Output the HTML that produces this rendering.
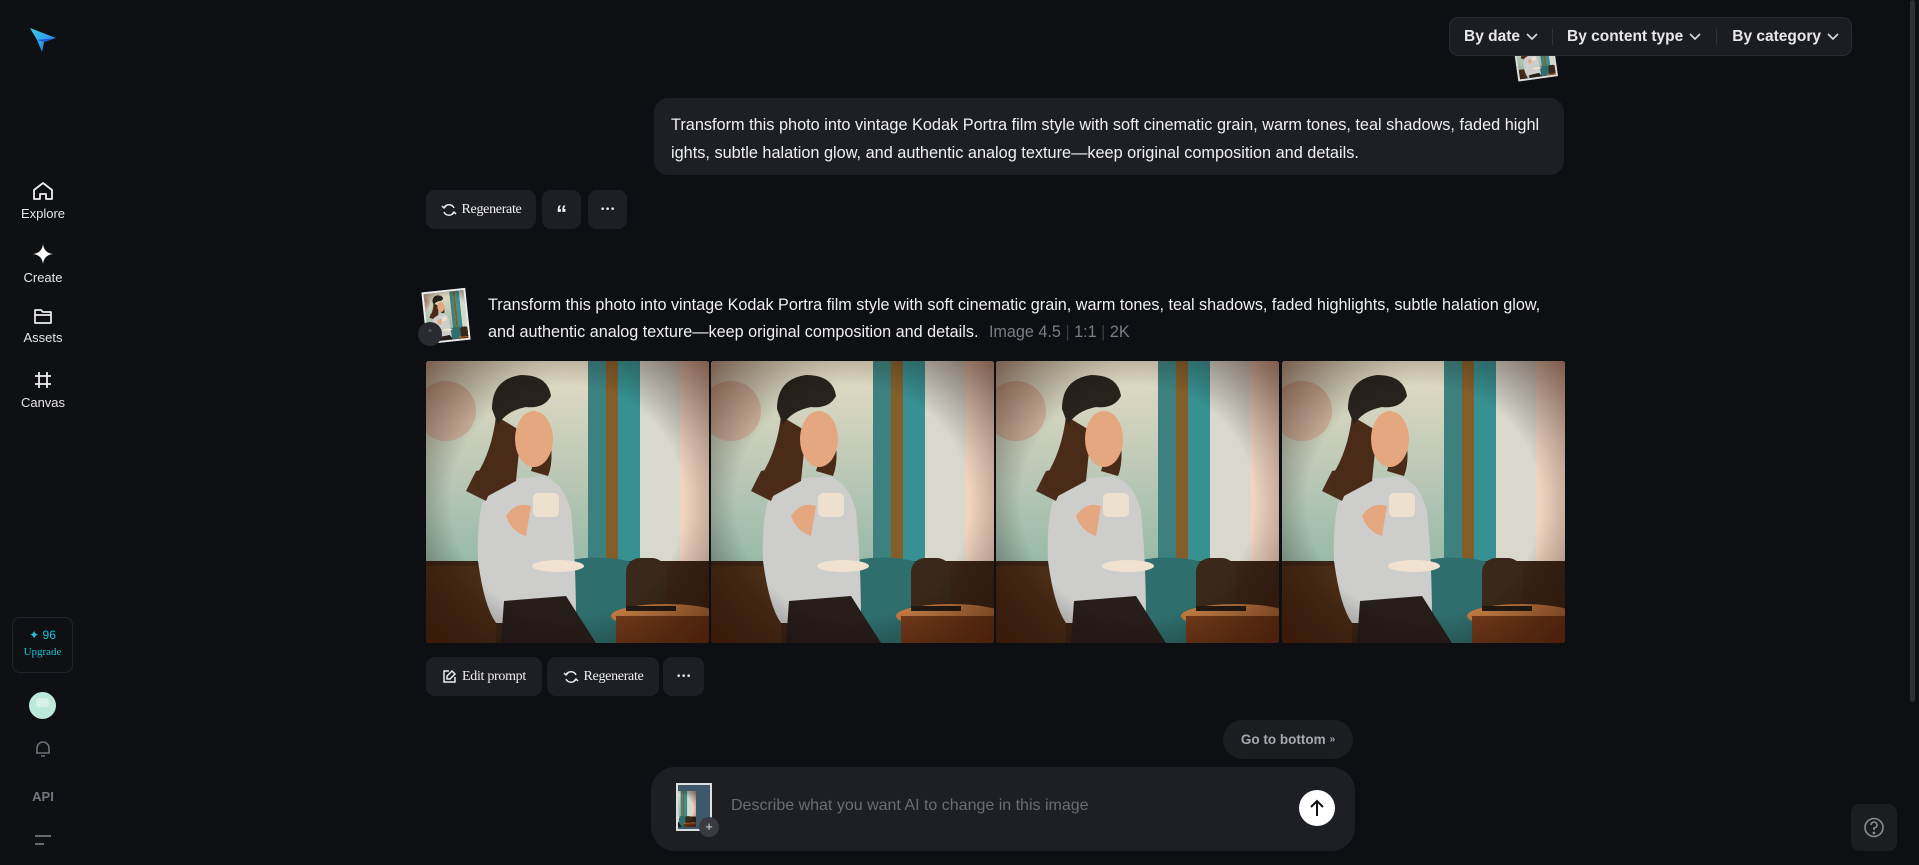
<!DOCTYPE html>
<html><head><meta charset="utf-8"><style>
*{box-sizing:border-box;margin:0;padding:0}
body{width:1919px;height:865px;background:#0e0f12;font-family:"Liberation Sans",sans-serif;color:#e8e9ec;position:relative;overflow:hidden}
.abs{position:absolute}
.side{left:0;top:0;width:86px;height:865px;background:#0f1013}
.nav{position:absolute;left:0;width:86px;text-align:center;font-size:13px;color:#e6e6e6}
.nav svg{display:block;margin:0 auto 5px}
.bubble{background:#1e1f24;border-radius:14px}
.btn{position:absolute;background:#1e1f24;border-radius:9px;height:39px;display:flex;align-items:center;justify-content:center;font-family:"Liberation Serif",serif;font-size:14px;color:#f0f0f0;gap:5px;letter-spacing:-0.3px}
.filters{left:1449px;top:17px;width:403px;height:39px;background:#1c1d22;border:1px solid #2a2b30;border-radius:9px;display:flex;align-items:center;font-size:15.5px;font-weight:bold;color:#e8e8e8}
.filters span{display:flex;align-items:center;gap:6px}
.sep{width:1px;height:16px;background:#333}
.tile{position:absolute;top:361px;width:283px;height:282px;overflow:hidden;border-radius:3px}
</style></head><body>
<svg width="0" height="0" style="position:absolute">
<defs>
<radialGradient id="vig" cx=".5" cy=".5" r=".75"><stop offset=".55" stop-color="#000" stop-opacity="0"/><stop offset="1" stop-color="#3a0e00" stop-opacity=".7"/></radialGradient>
<linearGradient id="win" x1="0" y1="0" x2="0" y2="1"><stop offset="0" stop-color="#e4e2d2"/><stop offset="1" stop-color="#8fbcb3"/></linearGradient>
<symbol id="scene" viewBox="0 0 283 282">
<rect width="283" height="282" fill="#e6dcc8"/>
<rect x="0" y="0" width="162" height="205" fill="url(#win)"/>
<circle cx="20" cy="50" r="30" fill="#c98a7a" opacity=".45"/>
<rect x="162" y="0" width="18" height="205" fill="#2c7f86"/>
<rect x="180" y="0" width="12" height="205" fill="#7a5a2a"/>
<rect x="192" y="0" width="22" height="205" fill="#27909a"/>
<rect x="214" y="0" width="40" height="235" fill="#d6dedb"/>
<rect x="254" y="0" width="29" height="235" fill="#efd9cc"/>
<rect x="0" y="200" width="283" height="82" fill="#2a1c14"/>
<rect x="0" y="205" width="70" height="77" fill="#3b2414"/>
<path d="M140 200 Q175 192 210 202 L212 282 L140 282Z" fill="#1d6b72"/>
<rect x="200" y="197" width="40" height="70" rx="14" fill="#2a2018"/>
<ellipse cx="240" cy="255" rx="55" ry="12" fill="#c07a44"/>
<rect x="190" y="255" width="93" height="27" fill="#6a3418"/>
<rect x="200" y="245" width="50" height="5" fill="#111"/>
<path d="M62 128 Q50 150 52 200 Q58 245 70 262 L150 262 Q150 200 145 150 Q138 122 118 115 L85 118Z" fill="#c9d2d8"/>
<path d="M60 140 L40 130 L50 110 L75 105Z" fill="#3b2418"/>
<path d="M70 55 Q66 90 50 115 Q45 130 62 135 L90 120 L95 70Z" fill="#3a2216"/>
<path d="M120 60 Q130 95 122 115 L105 110 Z" fill="#3a2216"/>
<ellipse cx="108" cy="78" rx="19" ry="28" fill="#e3a986"/>
<path d="M66 48 Q66 18 95 14 Q122 14 125 35 Q118 48 100 46 Q80 50 72 64Z" fill="#15191b"/>
<path d="M80 155 Q90 140 105 145 L100 175 Q85 170 80 155Z" fill="#e3a986"/>
<rect x="107" y="132" width="26" height="24" rx="5" fill="#ece7dd"/>
<ellipse cx="132" cy="205" rx="26" ry="6" fill="#efe8de"/>
<path d="M75 282 L78 240 L140 235 L170 282Z" fill="#15131a"/>
<rect x="0" y="0" width="283" height="282" fill="#ff9a30" opacity=".08"/>
<rect x="0" y="0" width="283" height="282" fill="url(#vig)"/>
</symbol>
</defs></svg>

<div class="abs side"></div>
<svg class="abs" style="left:28px;top:26px" width="30" height="28" viewBox="0 0 30 28"><defs><linearGradient id="lg" x1="0" y1="0" x2="1" y2="1"><stop offset="0" stop-color="#3fd3e8"/><stop offset="1" stop-color="#1d6fe6"/></linearGradient></defs><path d="M2 2 L28 12 L16 16 L14 26 L9 14 Z" fill="url(#lg)"/><path d="M9 14 L28 12 L16 16Z" fill="#1a5cd8"/></svg>

<div class="nav" style="top:181px"><svg width="22" height="20" viewBox="0 0 22 20" fill="none" stroke="#eee" stroke-width="1.8"><path d="M2 9 L11 2 L20 9 V18 H14 V13 H8 V18 H2Z" stroke-linejoin="round"/></svg>Explore</div>
<div class="nav" style="top:243px"><svg width="22" height="22" viewBox="0 0 22 22"><path d="M11 1 Q12 10 21 11 Q12 12 11 21 Q10 12 1 11 Q10 10 11 1Z" fill="#fff"/></svg>Create</div>
<div class="nav" style="top:307px"><svg width="20" height="18" viewBox="0 0 20 18" fill="none" stroke="#eee" stroke-width="1.7"><path d="M2 3 H8 L10 5 H18 V16 H2Z M2 8 H18" stroke-linejoin="round"/></svg>Assets</div>
<div class="nav" style="top:370px"><svg width="20" height="20" viewBox="0 0 20 20" fill="none" stroke="#eee" stroke-width="1.8"><path d="M6 2 V18 M14 2 V18 M2 6 H18 M2 14 H18"/></svg>Canvas</div>

<div class="abs" style="left:12px;top:617px;width:61px;height:56px;border:1px solid #222328;border-radius:8px;text-align:center;color:#19c4d8">
 <div style="font-size:12px;margin-top:10px">✦ 96</div>
 <div style="font-family:'Liberation Serif',serif;font-size:11px;margin-top:4px">Upgrade</div>
</div>
<div class="abs" style="left:29px;top:692px;width:27px;height:27px;border-radius:50%;background:#bde9db"><div style="margin:6px auto 0;width:13px;height:9px;background:#d8f2ea;border-radius:3px"></div></div>
<svg class="abs" style="left:33px;top:739px" width="20" height="20" viewBox="0 0 20 20" fill="none" stroke="#6d6f74" stroke-width="1.6"><path d="M4 14 V9 A6 6 0 0 1 16 9 V14 H3 H17 M8 17 H12"/></svg>
<div class="abs" style="left:0;width:86px;top:789px;text-align:center;font-weight:bold;font-size:13px;color:#75777c">API</div>
<svg class="abs" style="left:34px;top:833px" width="18" height="14" viewBox="0 0 18 14" stroke="#75777c" stroke-width="1.8"><path d="M1 3 H17 M1 11 H10"/></svg>

<div class="abs" style="left:1515px;top:33px;width:40px;height:46px;transform:rotate(-8deg);background:#4a6070;border:2px solid #ddd;overflow:hidden"><svg width="40" height="46" viewBox="0 0 283 282" preserveAspectRatio="xMidYMid slice"><use href="#scene"/></svg></div>
<div class="abs filters"><span style="margin-left:14px">By date <svg width="12" height="8" viewBox="0 0 12 8" fill="none" stroke="#ddd" stroke-width="1.6"><path d="M1 1 L6 6 L11 1"/></svg></span><div class="sep" style="margin:0 14px"></div><span>By content type <svg width="12" height="8" viewBox="0 0 12 8" fill="none" stroke="#ddd" stroke-width="1.6"><path d="M1 1 L6 6 L11 1"/></svg></span><div class="sep" style="margin:0 15px"></div><span>By category <svg width="12" height="8" viewBox="0 0 12 8" fill="none" stroke="#ddd" stroke-width="1.6"><path d="M1 1 L6 6 L11 1"/></svg></span></div>

<div class="abs bubble" style="left:654px;top:98px;width:910px;height:77px;padding:13px 0 0 17px;font-size:16.3px;line-height:28px;color:#f0f0f0;white-space:nowrap">Transform this photo into vintage Kodak Portra film style with soft cinematic grain, warm tones, teal shadows, faded highl<br>ights, subtle halation glow, and authentic analog texture—keep original composition and details.</div>

<div class="btn" style="left:426px;top:190px;width:110px"><svg width="16" height="14" viewBox="0 0 16 14" fill="none" stroke="#eee" stroke-width="1.5"><path d="M3 5 A5.5 5.5 0 0 1 13 5 M13 9 A5.5 5.5 0 0 1 3 9 M1 3 L3 5 L5 3 M11 11 L13 9 L15 11"/></svg>Regenerate</div>
<div class="btn" style="left:542px;top:190px;width:39px;font-family:'Liberation Sans';font-weight:bold;font-size:22px;padding-top:8px">“</div>
<div class="btn" style="left:588px;top:190px;width:39px;font-size:16px;font-weight:bold">···</div>

<div class="abs" style="left:424px;top:290px;width:44px;height:52px;transform:rotate(-6deg);background:#3e586b;border:2px solid #eee;overflow:hidden"><svg width="44" height="52" viewBox="0 0 283 282" preserveAspectRatio="xMidYMid slice"><use href="#scene"/></svg></div>
<div class="abs" style="left:418px;top:322px;width:24px;height:24px;border-radius:50%;background:#2a2b30;color:#777;font-size:10px;text-align:center;line-height:24px">“</div>
<div class="abs" style="left:488px;top:292px;font-size:16.2px;line-height:27px;color:#f0f0f0;white-space:nowrap">Transform this photo into vintage Kodak Portra film style with soft cinematic grain, warm tones, teal shadows, faded highlights, subtle halation glow,<br>and authentic analog texture—keep original composition and details. <span style="color:#7c7e84;margin-left:6px">Image 4.5 <span style="color:#3a3b40">|</span> 1:1 <span style="color:#3a3b40">|</span> 2K</span></div>

<div class="tile" style="left:426px"><svg width="283" height="282"><use href="#scene"/></svg></div>
<div class="tile" style="left:711px"><svg width="283" height="282"><use href="#scene"/></svg></div>
<div class="tile" style="left:996px"><svg width="283" height="282"><use href="#scene"/></svg></div>
<div class="tile" style="left:1282px"><svg width="283" height="282"><use href="#scene"/></svg></div>

<div class="btn" style="left:426px;top:657px;width:116px"><svg width="15" height="15" viewBox="0 0 15 15" fill="none" stroke="#eee" stroke-width="1.5"><path d="M7 2 H2 V13 H13 V8 M10 2 L13 5 L8 10 H5 V7Z"/></svg>Edit prompt</div>
<div class="btn" style="left:547px;top:657px;width:112px"><svg width="16" height="14" viewBox="0 0 16 14" fill="none" stroke="#eee" stroke-width="1.5"><path d="M3 5 A5.5 5.5 0 0 1 13 5 M13 9 A5.5 5.5 0 0 1 3 9 M1 3 L3 5 L5 3 M11 11 L13 9 L15 11"/></svg>Regenerate</div>
<div class="btn" style="left:663px;top:657px;width:41px;font-size:16px;font-weight:bold">···</div>

<div class="abs" style="left:1223px;top:720px;width:130px;height:39px;border-radius:20px;background:#1c1d21;color:#a7a9ae;font-weight:bold;font-size:13.5px;display:flex;align-items:center;justify-content:center;gap:4px">Go to bottom <span style="font-size:10px">»</span></div>

<div class="abs" style="left:651px;top:767px;width:704px;height:84px;border-radius:24px;background:#1e1f24"></div>
<div class="abs" style="left:676px;top:783px;width:36px;height:48px;border:2px solid #ddd;background:#3e586b;overflow:hidden"><svg width="36" height="48" viewBox="60 0 120 282" preserveAspectRatio="xMidYMid slice"><use href="#scene"/></svg></div>
<div class="abs" style="left:699px;top:817px;width:20px;height:20px;border-radius:50%;background:#3a3b40;color:#ddd;font-size:13px;text-align:center;line-height:20px">+</div>
<div class="abs" style="left:731px;top:797px;font-size:16px;color:#6b6d72">Describe what you want AI to change in this image</div>
<div class="abs" style="left:1299px;top:790px;width:36px;height:36px;border-radius:50%;background:#fff"><svg width="36" height="36" viewBox="0 0 36 36" fill="none" stroke="#111" stroke-width="2"><path d="M18 26 V11 M12 17 L18 11 L24 17"/></svg></div>

<div class="abs" style="left:1851px;top:804px;width:46px;height:47px;border-radius:9px;background:#1c1d21"><svg width="46" height="47" viewBox="0 0 46 47" fill="none" stroke="#8a8c90" stroke-width="1.6"><circle cx="23" cy="23.5" r="9"/><path d="M20 21 A3 3 0 1 1 23 24 V26"/><circle cx="23" cy="29" r=".6" fill="#8a8c90"/></svg></div>

<div class="abs" style="left:1910px;top:0;width:5px;height:702px;border-radius:3px;background:#2e2f33"></div>
</body></html>
